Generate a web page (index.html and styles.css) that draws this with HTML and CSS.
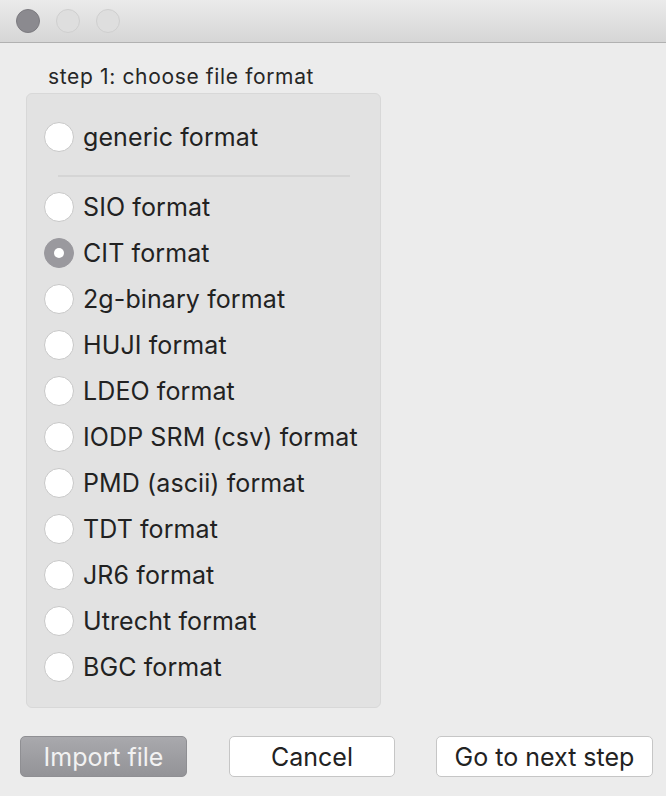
FILE: index.html
```html
<!DOCTYPE html>
<html>
<head>
<meta charset="utf-8">
<link rel="stylesheet" href="styles.css">
</head>
<body>
<div class="window">
  <div class="titlebar">
    <span class="light light-close"></span>
    <span class="light"></span>
    <span class="light"></span>
  </div>
  <div class="content">
    <div class="step-label">step 1: choose file format</div>
    <div class="group">
      <div class="radio-row"><span class="radio"></span><span class="label">generic format</span></div>
      <div class="separator"></div>
      <div class="radio-row"><span class="radio"></span><span class="label">SIO format</span></div>
      <div class="radio-row"><span class="radio checked"></span><span class="label">CIT format</span></div>
      <div class="radio-row"><span class="radio"></span><span class="label">2g-binary format</span></div>
      <div class="radio-row"><span class="radio"></span><span class="label">HUJI format</span></div>
      <div class="radio-row"><span class="radio"></span><span class="label">LDEO format</span></div>
      <div class="radio-row"><span class="radio"></span><span class="label">IODP SRM (csv) format</span></div>
      <div class="radio-row"><span class="radio"></span><span class="label">PMD (ascii) format</span></div>
      <div class="radio-row"><span class="radio"></span><span class="label">TDT format</span></div>
      <div class="radio-row"><span class="radio"></span><span class="label">JR6 format</span></div>
      <div class="radio-row"><span class="radio"></span><span class="label">Utrecht format</span></div>
      <div class="radio-row"><span class="radio"></span><span class="label">BGC format</span></div>
    </div>
    <div class="buttons">
      <button class="btn btn-disabled">Import file</button>
      <button class="btn btn-cancel">Cancel</button>
      <button class="btn btn-next">Go to next step</button>
    </div>
  </div>
</div>
</body>
</html>
```
FILE: styles.css
```css
html, body {
  margin: 0;
  padding: 0;
  background: #ececec;
}
.window {
  width: 666px;
  height: 796px;
  background: #ececec;
  font-family: Inter, "Noto Sans", sans-serif;
  color: #262626;
  overflow: hidden;
}
.titlebar {
  height: 43px;
  border-bottom: 1px solid #b1b1b1;
  background: linear-gradient(#ebebeb, #d6d6d6);
  display: flex;
  align-items: center;
  gap: 16px;
  padding-left: 16px;
  box-sizing: border-box;
}
.light {
  width: 24px;
  height: 24px;
  border-radius: 50%;
  box-sizing: border-box;
  border: 1px solid #cfcfcf;
  background: #dedede;
}
.light-close {
  background: #8b8a8f;
  border-color: #7c7b80;
}
.content {
  padding: 22px 0 0 26px;
}
.step-label {
  font-size: 21px;
  letter-spacing: 0.65px;
  padding-left: 22px;
  height: 28px;
  line-height: 24px;
}
.group {
  width: 355px;
  height: 615px;
  box-sizing: border-box;
  background: #e2e2e2;
  border: 1px solid #d8d8d8;
  border-radius: 6px;
  padding: 20px 0 0 17px;
}
.radio-row {
  display: flex;
  align-items: center;
  height: 46px;
}
.radio {
  width: 30px;
  height: 30px;
  border-radius: 50%;
  box-sizing: border-box;
  background: #ffffff;
  border: 1.5px solid #c8c8c8;
  margin-right: 9px;
  flex: none;
  display: flex;
  align-items: center;
  justify-content: center;
}
.radio.checked {
  background: #9a999e;
  border-color: #9a999e;
}
.radio.checked::after {
  content: "";
  width: 10px;
  height: 10px;
  border-radius: 50%;
  background: #ffffff;
}
.label {
  font-size: 25px;
  letter-spacing: 0.1px;
  color: #222222;
}
.separator {
  height: 2px;
  background: #d5d5d5;
  width: 292px;
  margin: 15px 0 7px 14px;
}
.buttons {
  display: flex;
  margin-top: 28px;
  margin-left: -6px;
}
.btn {
  height: 41px;
  box-sizing: border-box;
  border-radius: 5px;
  font-family: Inter, "Noto Sans", sans-serif;
  font-size: 25px;
  padding: 0;
  color: #222222;
  background: #ffffff;
  border: 1px solid #c6c6c6;
}
.btn-disabled {
  width: 167px;
  background: linear-gradient(#a9a9ad, #939397);
  border-color: #8f8f93;
  color: #f2f2f2;
}
.btn-cancel {
  width: 166px;
  margin-left: 42px;
}
.btn-next {
  width: 217px;
  margin-left: 41px;
}
```
